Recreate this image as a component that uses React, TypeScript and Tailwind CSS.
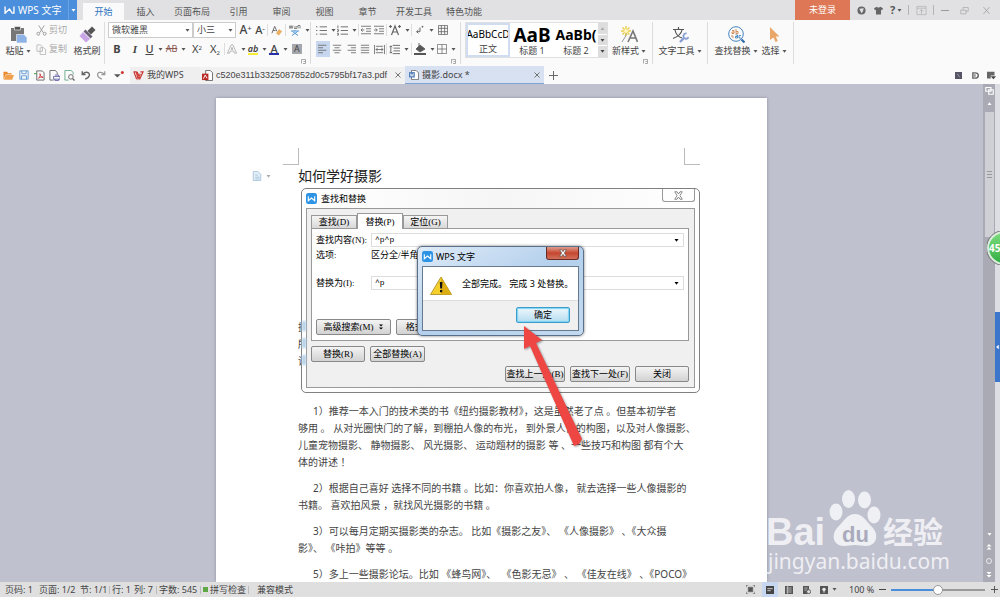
import type { ReactNode } from "react";

const menuTabs = ["插入", "页面布局", "引用", "审阅", "视图", "章节", "开发工具", "特色功能"];

const paragraphs = [
  [
    "1）推荐一本入门的技术类的书《纽约摄影教材》，这是虽然老了点 。但基本初学者",
    "够用 。 从对光圈快门的了解，到棚拍人像的布光， 到外景人像的构图，以及对人像摄影、",
    "儿童宠物摄影、 静物摄影、 风光摄影、 运动题材的摄影 等 、一些技巧和构图 都有个大",
    "体的讲述 ！",
  ],
  [
    "2）根据自己喜好 选择不同的书籍 。比如：你喜欢拍人像， 就去选择一些人像摄影的",
    "书籍。 喜欢拍风景 ，就找风光摄影的书籍 。",
  ],
  [
    "3）可以每月定期买摄影类的杂志。 比如《摄影之友》、 《人像摄影》 、《大众摄",
    "影》、 《咔拍》等等 。",
  ],
  ["5）多上一些摄影论坛。比如 《蜂鸟网》、  《色影无忌》 、 《佳友在线》 、《POCO》"],
];

export default function App() {
  return (
    <div className="flex h-screen flex-col overflow-hidden bg-[#bfc1cf] font-['Noto_Sans','Noto_Sans_CJK_SC',sans-serif] text-[9px] leading-3 text-[#444]">
      <TitleBar />
      <Ribbon />
      <DocumentTabs />
      <Workspace />
      <StatusBar />
    </div>
  );
}

/* ---------- shared bits ---------- */

function Caret({ className = "text-[#555]" }: { className?: string }) {
  return (
    <svg viewBox="0 0 5 3" className={`h-[3px] w-[5px] shrink-0 ${className}`} fill="currentColor">
      <path d="M0.5 0h4L2.5 2.8z" />
    </svg>
  );
}

function Icon({
  children,
  size = "size-3",
  className = "text-[#666]",
  box = "0 0 12 12",
}: {
  children: ReactNode;
  size?: string;
  className?: string;
  box?: string;
}) {
  return (
    <svg viewBox={box} className={`shrink-0 ${size} ${className}`} fill="none" stroke="currentColor" strokeWidth="1">
      {children}
    </svg>
  );
}

function Tool({ label, w = "w-[14px]", caret = false, active = false, children }: {
  label: string;
  w?: string;
  caret?: boolean;
  active?: boolean;
  children: ReactNode;
}) {
  return (
    <button
      type="button"
      aria-label={label}
      className={`flex h-4 shrink-0 items-center justify-center gap-1 ${w} ${active ? "bg-[#c6d7ef]" : ""}`}
    >
      {children}
      {caret && <Caret />}
    </button>
  );
}

function Bar() {
  return <span className="h-3 w-px shrink-0 bg-[#ddd]" />;
}

function BigTool({ label, w, caret = true, children }: { label: string; w: string; caret?: boolean; children: ReactNode }) {
  return (
    <button type="button" className={`flex shrink-0 flex-col items-center gap-[2px] pt-1 ${w}`}>
      {children}
      <span className="flex items-center gap-[2px] whitespace-nowrap">
        {label}
        {caret && <Caret />}
      </span>
    </button>
  );
}

function Launcher() {
  return (
    <Icon size="size-[5px]" box="0 0 5 5" className="absolute right-1 bottom-0 text-[#888]">
      <path d="M0.5 4.500V0.500H4.500V4.500H2M2.500 2.500H4" strokeWidth=".7" />
    </Icon>
  );
}

function WpsLogo({ className }: { className: string }) {
  return (
    <svg viewBox="0 0 12 12" className={className}>
      <rect width="12" height="12" rx="2.500" fill="#2d93e4" />
      <path d="M2.500 3.500v5l3.500-3 3.500 3v-5" fill="none" stroke="#fff" strokeWidth="1.200" />
    </svg>
  );
}

/* ---------- title bar ---------- */

function TitleBar() {
  return (
    <header className="flex h-5 shrink-0 items-stretch bg-[#e1e1e3]">
      <button type="button" className="flex w-[77px] shrink-0 items-center bg-[#4b8edb] text-[10px] text-white">
        <Icon className="ml-1 text-white" size="h-2 w-[11px]" box="0 0 12 9">
          <path d="M1 .5v7.500l5-4.500 3 4.500h2V.500M1 8l1.500-.5" strokeWidth="1.500" />
        </Icon>
        <span className="ml-[3px] flex-1 text-left whitespace-nowrap">WPS 文字</span>
        <span className="flex h-full w-[9px] items-center justify-center border-l border-[#6aa3e3]">
          <Caret className="text-white" />
        </span>
      </button>
      <nav className="ml-[6px] flex items-end">
        <button type="button" className="h-[17px] w-[41px] bg-[#fafafa] text-[#2e74c0]">开始</button>
        {menuTabs.map((t) => (
          <button
            key={t}
            type="button"
            className={`h-[17px] text-[#555] whitespace-nowrap ${t.length === 4 ? "w-[50px]" : "w-[43px]"}`}
          >
            {t}
          </button>
        ))}
      </nav>
      <div className="ml-auto flex items-center">
        <button type="button" className="mr-1 h-5 w-[55px] bg-[#dd7755] text-white">未登录</button>
        <Tool label="Skin">
          <svg viewBox="0 0 10 10" className="size-[9px]">
            <circle cx="5" cy="5" r="4.500" fill="#666" />
            <path d="M2.500 3l5-.5-1 3.500L5 8z" fill="#e1e1e3" />
          </svg>
        </Tool>
        <Tool label="Themes" w="w-5">
          <svg viewBox="0 0 10 10" className="size-[9px]" fill="#666">
            <path d="M3 .8L0 2.500l1 2.300 1.200-.5V9.500h5.600V4.300L9 4.800l1-2.300L7 .8C6.500 2 3.500 2 3 .8z" />
          </svg>
        </Tool>
        <Tool label="Help" w="w-4">
          <b className="-mr-[2px] text-[11px] text-[#555]">?</b>
          <Caret />
        </Tool>
        <span className="ml-1 h-[10px] w-px bg-[#b5b5b8]" />
        <Tool label="Collapse ribbon" w="w-6">
          <Icon size="size-[11px]" className="text-[#bbb]">
            <path d="M1 1.500h10v9H1zM1 3.500h10M6 10V5M4 7l2-2 2 2" />
          </Icon>
        </Tool>
        <span className="h-[10px] w-px bg-[#b5b5b8]" />
        <Tool label="Minimize" w="w-[22px]">
          <span className="h-px w-2 bg-[#999]" />
        </Tool>
        <Tool label="Restore" w="w-4">
          <Icon size="size-[9px]" className="text-[#aaa]">
            <path d="M1 5.500h7v5H1zM4 5V2h7v5H8" />
          </Icon>
        </Tool>
        <Tool label="Close" w="w-7">
          <Icon size="size-[9px]" className="text-[#999]">
            <path d="M2 1.500l8 9M10 1.500l-8 9" />
          </Icon>
        </Tool>
      </div>
    </header>
  );
}

/* ---------- ribbon ---------- */

function Ribbon() {
  return (
    <section className="flex h-[46px] shrink-0 bg-[#fafafa] py-[2px]">
      {/* clipboard */}
      <div className="flex w-[105px] shrink-0 border-r border-[#ddd]">
        <BigTool label="粘贴" w="w-9">
          <Icon size="size-[17px]" box="0 0 17 17">
            <path d="M1 2h13v13H1z" fill="#777" stroke="none" />
            <path d="M4.500 .5h6v3.500h-6z" fill="#555" stroke="#fafafa" strokeWidth=".6" />
            <path d="M6.500 8.500H14l3 3V17H6.500z" fill="#8fb2e6" stroke="#fafafa" strokeWidth=".6" />
          </Icon>
        </BigTool>
        <div className="flex w-9 shrink-0 flex-col gap-[3px] text-[#aaa]">
          <button type="button" className="flex h-4 items-center gap-[2px] whitespace-nowrap">
            <Icon size="size-[11px]" className="text-[#999]">
              <path d="M3 .5l5 8M9 .5l-5 8" />
              <circle cx="2.500" cy="9.500" r="1.600" />
              <circle cx="9.500" cy="9.500" r="1.600" />
            </Icon>
            剪切
          </button>
          <button type="button" className="flex h-4 items-center gap-[2px] whitespace-nowrap">
            <Icon size="size-[11px]" className="text-[#bbb]">
              <path d="M1 1h4l2 2v5H1zM4.500 4h4l2 2v5.500h-6z" fill="#fafafa" />
            </Icon>
            复制
          </button>
        </div>
        <BigTool label="格式刷" w="w-[30px]" caret={false}>
          <Icon size="size-[17px]" box="0 0 17 17">
            <path d="M13 .5L16.500 4 12 8.500 8.500 5z" fill="#555" stroke="none" />
            <path d="M6.500 3.500l7 7-2 2-7-7z" fill="#6b6177" stroke="none" />
            <path d="M4 6l7 7-4 3.500L.500 10z" fill="#c9a6e6" stroke="none" />
          </Icon>
        </BigTool>
      </div>

      {/* font */}
      <div className="relative flex w-[206px] shrink-0 flex-col gap-[3px] border-r border-[#ddd] pl-[3px]">
        <div className="flex h-4 items-center">
          <Combo label="Font" value="微软雅黑" w="w-[85px]" />
          <Combo label="Font size" value="小三" w="w-[43px]" />
          <Tool label="Grow font" w="ml-[2px] w-[15px]">
            <span className="text-[12px] font-medium">A<sup className="text-[7px]">+</sup></span>
          </Tool>
          <Tool label="Shrink font">
            <span className="text-[11px] font-medium">A<sup className="text-[7px]">-</sup></span>
          </Tool>
          <Bar />
          <Tool label="Clear format" w="w-[17px]">
            <Icon size="size-[11px]">
              <path d="M1 9L4 1.500 6.500 7M2 6h3" />
              <path d="M6 9l3-4 2.500 2-3 4z" fill="#f0b260" stroke="#d9933c" strokeWidth=".6" />
            </Icon>
          </Tool>
          <Bar />
          <Tool label="Phonetic guide" w="w-[26px]" caret>
            <Icon size="size-3">
              <path d="M0 1.500l1 3 1-3 1 3 1-3M5 3h3V2M5 4.500h3M9 4.500v-3h2v3" strokeWidth=".8" />
              <path d="M2 7h8M6 6v1M3.500 7.500L9 11.500M8.500 7.500L3 11.500" stroke="#4f97d6" />
            </Icon>
          </Tool>
        </div>
        <div className="flex h-4 items-center text-[11px]">
          <Tool label="Bold" w="w-[18px]"><b>B</b></Tool>
          <Tool label="Italic" w="w-[18px]"><i className="font-['Liberation_Serif',serif] font-bold">I</i></Tool>
          <Tool label="Underline" w="w-5" caret><span className="font-medium underline">U</span></Tool>
          <Tool label="Strikethrough" w="w-6" caret><span className="text-[9px] text-[#8b5550] line-through">AB</span></Tool>
          <Tool label="Superscript" w="w-[18px]"><span>X<sup className="text-[6px]">2</sup></span></Tool>
          <Tool label="Subscript" w="w-[18px]"><span>X<sub className="text-[6px]">2</sub></span></Tool>
          <Bar />
          <Tool label="Text effects" w="w-[22px]" caret>
            <Icon size="size-[10px]" className="text-[#999]">
              <path d="M.5 11L5 1h2l4.500 10H9L8 8.500H4L3 11zM5 6.500h2L6 4z" strokeWidth=".8" />
            </Icon>
          </Tool>
          <Tool label="Highlight" w="w-[21px]" caret>
            <span className="border-b-2 border-[#f5ec35] text-[9px] leading-[9px] font-semibold italic">ab</span>
          </Tool>
          <Tool label="Font color" w="w-[21px]" caret>
            <span className="border-b-2 border-[#2830a8] px-[1px] text-[11px] leading-[9px] font-medium">A</span>
          </Tool>
          <Tool label="Character shading" w="w-4">
            <span className="bg-[#a5a7ad] px-[2px] text-[9px] leading-[10px]">A</span>
          </Tool>
        </div>
        <Launcher />
      </div>

      {/* paragraph */}
      <div className="relative flex w-[150px] shrink-0 flex-col gap-[3px] border-r border-[#ddd] pl-[5px]">
        <div className="flex h-4 items-center">
          <Tool label="Bullets" w="w-5" caret>
            <Icon size="size-[11px]"><path d="M4 2h8M4 6h8M4 10h8M0 2h1.500M0 6h1.500M0 10h1.500" /></Icon>
          </Tool>
          <Tool label="Numbering" w="w-[22px]" caret>
            <Icon size="size-[11px]"><path d="M4 2h8M4 6h8M4 10h8M1 .5v3M0 5h1.500v2H0M0 9h1.500v2H0" /></Icon>
          </Tool>
          <Bar />
          <Tool label="Decrease indent" w="w-[13px]">
            <Icon size="size-[10px]"><path d="M0 1.500h12M6 4.500h6M6 7.500h6M0 10.500h12M4 6H0M2 4L0 6l2 2" /></Icon>
          </Tool>
          <Tool label="Increase indent">
            <Icon size="size-[10px]"><path d="M0 1.500h12M6 4.500h6M6 7.500h6M0 10.500h12M0 6h4M2 4l2 2-2 2" /></Icon>
          </Tool>
          <Bar />
          <Tool label="Text direction" w="w-6" caret>
            <Icon><path d="M2.500 11L6 2l3.500 9M4 8h4M0 2.500h3M1.500 1v3M9 2.500h3M10.500 1v3" strokeWidth="1.200" /></Icon>
          </Tool>
          <Bar />
          <Tool label="Paragraph marks" w="w-6" caret>
            <Icon size="size-[10px]"><path d="M2 8h4V3M2 8l2-2M2 8l2 2M9 1v2M8 2h2" strokeWidth="1.200" /></Icon>
          </Tool>
          <Tool label="Table">
            <Icon size="size-[10px]"><path d="M.5.500h11v11H.500zM.5 4h11M.500 8h11M4 .5v11M8 .5v11" /></Icon>
          </Tool>
        </div>
        <div className="flex h-4 items-center">
          <Tool label="Align left" active>
            <Icon size="size-[10px]"><path d="M0 1.500h10M0 4.500h6M0 7.500h10M0 10.500h6" /></Icon>
          </Tool>
          <Tool label="Center">
            <Icon size="size-[10px]"><path d="M1 1.500h10M3 4.500h6M1 7.500h10M3 10.500h6" /></Icon>
          </Tool>
          <Tool label="Align right">
            <Icon size="size-[10px]"><path d="M2 1.500h10M6 4.500h6M2 7.500h10M6 10.500h6" /></Icon>
          </Tool>
          <Tool label="Justify">
            <Icon size="size-[10px]"><path d="M1 1.500h10M1 4.500h10M1 7.500h10M1 10.500h10" /></Icon>
          </Tool>
          <Tool label="Distribute">
            <Icon size="size-[11px]"><path d="M.5 1v10M11.500 1v10M2 2.500h8M2 9.500h8M2 6h8M4 4.500L2 6l2 1.500M8 4.500L10 6 8 7.500" strokeWidth=".9" /></Icon>
          </Tool>
          <Bar />
          <Tool label="Line spacing" w="w-6" caret>
            <Icon size="size-[11px]"><path d="M4 1.500h8M5 4.500h7M5 7.500h7M4 10.500h8M2 2v8M.5 3.500L2 2l1.500 1.500M.500 8.500L2 10l1.500-1.500" /></Icon>
          </Tool>
          <Bar />
          <Tool label="Shading" w="w-6" caret>
            <Icon size="size-[12px]">
              <path d="M6 2l5 4-5 3-4-3z" fill="#555" />
              <path d="M5 0v4" />
              <path d="M0 10h12v2H0z" fill="#555" stroke="none" />
            </Icon>
          </Tool>
          <Tool label="Borders" w="w-5" caret>
            <Icon size="size-[10px]"><path d="M.5.500h11v11H.500zM.5 6h11M6 .5v11" strokeWidth=".9" /></Icon>
          </Tool>
        </div>
        <Launcher />
      </div>

      {/* styles */}
      <div className="relative flex w-[192px] shrink-0 border-r border-[#ddd] pl-1">
        <div className="flex h-9 shrink-0 border border-[#e0e0e0] bg-white text-black">
          <button type="button" className="flex w-[44px] flex-col items-center overflow-hidden border-2 border-[#d0dcf0]">
            <span className="flex h-5 items-center text-[10px]">AaBbCcD</span>
            <span className="text-[#444]">正文</span>
          </button>
          <button type="button" className="flex w-[44px] flex-col items-center pt-[2px]">
            <span className="h-5 text-[19px] leading-5 font-bold">AaB</span>
            <span className="text-[#444]">标题 1</span>
          </button>
          <button type="button" className="flex w-[44px] flex-col items-center pt-[2px]">
            <span className="h-5 text-[14px] leading-5 font-bold">AaBb(</span>
            <span className="text-[#444]">标题 2</span>
          </button>
          <div className="flex w-[9px] flex-col gap-px">
            {["Scroll styles up", "Scroll styles down", "More styles"].map((n, i) => (
              <button key={n} type="button" aria-label={n} className="flex flex-1 items-center justify-center bg-[#ddd]">
                <Caret className={i === 0 ? "rotate-180 text-[#aaa]" : "text-[#444]"} />
              </button>
            ))}
          </div>
        </div>
        <BigTool label="新样式" w="w-[42px]">
          <Icon size="size-[17px]" box="0 0 17 17">
            <path d="M7 16L12 5l4.500 11M9 12h6" stroke="#777" strokeWidth="1.600" />
            <path d="M4 10l2-4M1 16l5-8" stroke="#999" />
            <path d="M5 0v10M0 5h10M1.500 1.500l7 7M8.500 1.500l-7 7" stroke="#ebcc4b" strokeWidth="1.400" />
            <circle cx="5" cy="5" r="2" fill="#fff6c0" stroke="none" />
          </Icon>
        </BigTool>
        <Launcher />
      </div>

      {/* text tools */}
      <div className="flex w-[55px] shrink-0 justify-center border-r border-[#ddd]">
        <BigTool label="文字工具" w="w-[44px]">
          <Icon size="size-[17px]" box="0 0 17 17">
            <path d="M1 3.500h11M6.500 1v2.500M3 4c1 5 4 7 7 8M10 4C9 9 5 11 1 12.500" stroke="#555" strokeWidth="1.200" />
            <path d="M8 16l4-4" stroke="#879fd2" strokeWidth="2.400" />
            <path d="M14.500 7.500a2.600 2.600 0 10 2 3.500" stroke="#879fd2" strokeWidth="1.800" />
          </Icon>
        </BigTool>
      </div>

      {/* find and select */}
      <div className="flex w-[86px] shrink-0 border-r border-[#ddd] pl-[5px]">
        <BigTool label="查找替换" w="w-[46px]">
          <Icon size="size-[17px]" box="0 0 17 17">
            <circle cx="8" cy="8" r="7.300" stroke="#4384bf" />
            <path d="M13.500 13.500l3 3" stroke="#2e6da8" strokeWidth="2.200" />
            <path d="M4 4.500h2v3H4V6h2M8 3v4.500h2V5.500H8M4 9v2h2" stroke="#cf8850" strokeWidth=".9" />
            <path d="M7.500 9h2v3h-2v-1.500h2M13 9.500h-2V12h2" stroke="#4384bf" strokeWidth=".9" />
          </Icon>
        </BigTool>
        <BigTool label="选择" w="w-[30px]">
          <Icon size="size-[17px]" box="0 0 17 17">
            <path d="M4 1l9.500 9.500H9.800l2 4.500-2.300 1-2-4.500L4 14z" fill="#e9a869" stroke="none" />
          </Icon>
        </BigTool>
      </div>
    </section>
  );
}

function Combo({ label, value, w }: { label: string; value: string; w: string }) {
  return (
    <span className={`relative flex h-4 shrink-0 items-center border border-[#ccc] bg-white ${w}`}>
      <select aria-label={label} className="h-full w-full appearance-none bg-transparent pl-[3px] outline-none">
        <option>{value}</option>
      </select>
      <span className="pointer-events-none absolute right-[2px]"><Caret /></span>
    </span>
  );
}

/* ---------- quick access + open documents ---------- */

function DocumentTabs() {
  return (
    <div className="flex h-[18px] shrink-0 items-center bg-[#fafafa]">
      <div className="flex w-[130px] shrink-0 items-center">
        <Tool label="Open" w="w-4">
          <Icon size="size-[11px]"><path d="M.5 10.500V2h4l1 1.500h4V5H3z" fill="#e98b2e" stroke="none" /><path d="M3 5.500h9L10 10.500H1z" fill="#f0a04b" stroke="none" /></Icon>
        </Tool>
        <Tool label="Save" w="w-4">
          <Icon size="size-[10px]" className="text-[#4d8fcd]"><path d="M1 1h10v10H1zM3.500 1v3.500h5V1M3 11V7h6v4" /></Icon>
        </Tool>
        <Tool label="Export PDF" w="w-[15px]">
          <Icon size="size-[11px]"><path d="M3 1h6l2 2v8H3z" /><path d="M5 9c2-2 2-4 1.500-5C7 7 8 7.500 10 8 8 7.500 6 8 5 9z" stroke="#c33" /><path d="M0 4h3" stroke="#393" /></Icon>
        </Tool>
        <Tool label="Print" w="w-[15px]">
          <Icon size="size-[11px]"><path d="M9 5V3L7 .5H1V11h4" /><path d="M5 7h7v3H5zM6.500 5.500h4V7M6.500 10v1.500h4V10" stroke="#66a" /></Icon>
        </Tool>
        <Tool label="Print preview" w="w-[15px]">
          <Icon size="size-[11px]"><path d="M10 5V3L8 .5H1V11h4" stroke="#6a8" /><circle cx="7.500" cy="7.500" r="2.500" /><path d="M9.500 9.500l2 2" strokeWidth="1.500" /></Icon>
        </Tool>
        <Tool label="Undo" w="w-[17px]">
          <Icon size="size-[10px]" className="text-[#666]"><path d="M2 5c4-4 9-2 8 1.500C9.500 9 7.500 10 5 11M1.500 1.500V5.500h4" strokeWidth="1.700" /></Icon>
        </Tool>
        <Tool label="Redo" w="w-[14px]">
          <Icon size="size-[10px]" className="text-[#999]"><path d="M10 5C6 1 1 3 2 6.500 2.500 9 4.500 10 7 11M10.500 1.500V5.500h-4" strokeWidth="1.500" /></Icon>
        </Tool>
        <Tool label="More commands" w="w-[22px]">
          <Icon size="size-[10px]"><path d="M0 5h8L4 9z" fill="#555" stroke="none" /><circle cx="10" cy="3" r="1.800" fill="#d0342c" stroke="none" /></Icon>
        </Tool>
      </div>
      <button type="button" className="flex h-[17px] w-[70px] shrink-0 items-center gap-[3px] bg-[#efeff0] pl-[3px] whitespace-nowrap">
        <Icon size="size-[11px]" className="text-[#cc3a33]"><path d="M.5 2h3l2 7.500L8 4M4.500 2l3 7.500L11 2H8M1 2l3 8" strokeWidth="1.300" /></Icon>
        我的WPS
      </button>
      <div className="flex h-[17px] w-[205px] shrink-0 items-center gap-[3px] bg-[#f1f1f2] pr-1 pl-[2px]">
        <Icon size="size-[11px]"><path d="M4 .5h5l2.500 2.500v8.500H4z" fill="#fff" /><path d="M0 4h7v7H0z" fill="#b92b27" stroke="none" /><path d="M1.500 9.500l2-4 2 3.500" stroke="#fff" /></Icon>
        <button type="button" className="flex-1 text-left font-['Liberation_Sans',Arial,sans-serif] whitespace-nowrap">
          c520e311b3325087852d0c5795bf17a3.pdf
        </button>
        <CloseTab />
      </div>
      <div className="flex h-[18px] w-[139px] shrink-0 items-center gap-[3px] border-b border-[#7ea3d4] bg-[#d8e1f2] pr-1 pl-1">
        <Icon size="size-[10px]"><path d="M3 .5h5.500l3 3v8H3z" fill="#fff" /><path d="M0 2.500h7v6.500H0z" fill="#5580b8" stroke="none" /><path d="M1.500 4l1 3.500 1-2.500 1 2.500 1-3.500" stroke="#fff" strokeWidth=".8" /></Icon>
        <button type="button" className="flex-1 text-left whitespace-nowrap">摄影.docx *</button>
        <CloseTab />
      </div>
      <Tool label="New tab" w="w-[18px]">
        <Icon size="size-[9px]"><path d="M6 0v12M0 6h12" strokeWidth="1.300" /></Icon>
      </Tool>
      <div className="ml-auto flex items-center">
        <Tool label="Sidebar" w="w-[17px]">
          <Icon size="size-[7px]"><path d="M0 0h12v12H0z" fill="#556" stroke="none" /><path d="M4 3l4 6" stroke="#ccc" /></Icon>
        </Tool>
        <Tool label="Docer" w="w-4">
          <Icon size="size-[7px]"><path d="M1.500 1.500h4c7 0 7 9 0 9h-4z" strokeWidth="2.500" /><path d="M5 4v4" strokeWidth="2" /></Icon>
        </Tool>
        <Tool label="Window list" w="w-[17px]">
          <Icon size="size-[9px]"><path d="M0 1h10v5H5v4H0z" fill="#666" stroke="none" /><path d="M5 7h7l-3.500 4z" fill="#444" stroke="none" /></Icon>
        </Tool>
      </div>
    </div>
  );
}

function CloseTab() {
  return (
    <button type="button" aria-label="Close tab" className="shrink-0">
      <Icon size="size-[6px]"><path d="M1 1l10 10M11 1L1 11" strokeWidth="1.800" /></Icon>
    </button>
  );
}

/* ---------- workspace ---------- */

function Workspace() {
  return (
    <main className="relative flex min-h-0 flex-1">
      <div className="flex min-w-0 flex-1 justify-center overflow-hidden pt-[14px]">
        <Page />
      </div>

      {/* scroll bar */}
      <div className="flex w-3 shrink-0 flex-col items-center bg-[#a9aab3] text-white">
        <Icon size="size-[9px]" className="mt-[2px] text-white"><path d="M1 2h7v5H1zM5 5h6v6H5z" strokeWidth="1.500" /></Icon>
        <Caret className="mt-[7px] rotate-180 text-white" />
        <div className="mt-[7px] flex h-[125px] w-[9px] flex-col items-center justify-center gap-[2px] bg-[#cfd0d5]">
          <span className="h-px w-[5px] bg-[#999]" />
          <span className="h-px w-[5px] bg-[#999]" />
          <span className="h-px w-[5px] bg-[#999]" />
        </div>
        <div className="mt-auto flex flex-col items-center gap-2 pb-1">
          <Caret className="text-white" />
          <Icon size="size-[6px]" className="text-white"><path d="M6 0l5 5H1zM6 6l5 5H1z" fill="#fff" stroke="none" /></Icon>
          <Icon size="size-[6px]" className="text-white"><circle cx="6" cy="6" r="5" strokeWidth="1.500" /></Icon>
          <Icon size="size-[6px]" className="text-white"><path d="M6 5L1 0h10zM6 11L1 6h10z" fill="#fff" stroke="none" /></Icon>
        </div>
      </div>
      <div className="w-[5px] shrink-0 bg-[#dddee3] pt-[228px]">
        <button type="button" aria-label="Open task pane" className="flex h-[70px] w-full items-center justify-center bg-[#3c76cb]">
          <Icon size="size-[4px]" className="text-white"><path d="M8 0L1 6l7 6z" fill="#fff" /></Icon>
        </button>
      </div>

      {/* floating badge, half outside the window */}
      <div className="absolute top-[147px] right-0 h-[34px] w-[13px] overflow-hidden">
        <div className="flex size-[34px] items-center rounded-full border-2 border-[#d8eedb] bg-linear-to-b from-[#7bdc7d] to-[#2fae43] text-[10px] font-bold text-white outline outline-[#777]">
          45
        </div>
      </div>

      <Watermark />
    </main>
  );
}

function Page() {
  return (
    <article className="relative min-h-full w-[551px] shrink-0 bg-white shadow-[0_0_3px_#8d8f9a]">
      <div className="flex justify-between px-[67px] pt-[50px]">
        <span className="h-[17px] w-4 border-r border-b border-[#bbb]" />
        <span className="h-[17px] w-4 border-b border-l border-[#bbb]" />
      </div>
      <div className="flex items-center pl-9">
        <div className="flex w-[46px] items-center gap-1">
          <Icon size="size-[10px]" className="text-[#a3c1d8]"><path d="M1.500.500H7l3.500 3.500v7.500h-9zM4 5h3M4 7.500h5M4 9.500h5" fill="#dfeef7" /></Icon>
          <Caret className="text-[#aaa]" />
        </div>
        <h1 className="text-[14px] leading-[22px] text-[#222]">如何学好摄影</h1>
      </div>

      <div className="px-[82px] text-[10px] leading-[17px] text-[#444]">
        <p className="mt-[132px] mb-[33px]">
          <span className="block">摄</span>
          <span className="block">所</span>
          <span className="block">讲</span>
        </p>
        {paragraphs.map((lines) => (
          <p key={lines[0]} className="mb-[9px] indent-[15px]">
            {lines.map((line, i) => (
              <span key={line} className={`block whitespace-pre ${i > 0 ? "indent-0" : ""}`}>
                {line}
              </span>
            ))}
          </p>
        ))}
      </div>

      <FindReplaceDialog />
      <MessageBox />

      <svg viewBox="0 0 64 126" className="absolute top-[226px] left-[304px] h-[126px] w-16 drop-shadow-[1px_1px_1px_#0006]">
        <path d="M4 2L22 16l-6 3 46 96-3 5-5 2L10 22l-6 3z" fill="#ee4642" />
      </svg>
    </article>
  );
}

/* ---------- find and replace ---------- */

function DialogButton({ children, w }: { children: ReactNode; w: string }) {
  return (
    <button
      type="button"
      className={`flex h-4 shrink-0 items-center justify-center gap-1 rounded-[2px] border border-[#888] bg-linear-to-b from-[#f4f4f4] to-[#d2d2d2] whitespace-nowrap ${w}`}
    >
      {children}
    </button>
  );
}

function ComboInput({ id, value }: { id: string; value: string }) {
  return (
    <div className="flex h-[14px] flex-1 items-center border border-[#ddd] bg-white pr-1">
      <input id={id} defaultValue={value} className="min-w-0 flex-1 bg-transparent pl-[3px] font-['Liberation_Mono',monospace] text-[8px] outline-none" />
      <button type="button" aria-label="Show history"><Caret className="text-black" /></button>
    </div>
  );
}

function FindReplaceDialog() {
  return (
    <div
      role="dialog"
      aria-label="查找和替换"
      className="absolute top-[90px] left-[85px] flex h-[205px] w-[399px] flex-col rounded-[5px] border border-[#808080] bg-linear-to-r from-white via-[#f6f6f6] to-white px-1 pb-1 font-['Liberation_Serif','Noto_Sans_CJK_SC',serif] text-[9px] leading-3 text-black"
    >
      <div className="flex h-[19px] shrink-0 items-center">
        <WpsLogo className="size-[11px]" />
        <span className="ml-1">查找和替换</span>
        <button
          type="button"
          aria-label="Close"
          className="ml-auto flex h-[13px] w-[33px] items-center justify-center self-start rounded-b-[3px] border border-t-0 border-[#999]"
        >
          <Icon size="size-[9px]" className="text-[#666]"><path d="M1 1h3l2 3 2-3h3L8 6l3 5H8L6 8l-2 3H1l3-5z" fill="#fff" /></Icon>
        </button>
      </div>
      <div className="flex flex-1 flex-col border border-[#999] bg-[#f0f0f0] pt-1 pr-[5px] pl-1">
        <div className="flex items-end">
          <button type="button" className="h-[13px] w-[46px] border border-b-0 border-[#999] bg-linear-to-b from-[#f5f5f5] to-[#d8d8d8]">查找(D)</button>
          <button type="button" className="relative -mb-px h-4 w-[46px] border border-b-0 border-[#999] bg-white">替换(P)</button>
          <button type="button" className="h-[13px] w-[45px] border border-b-0 border-[#999] bg-linear-to-b from-[#f5f5f5] to-[#d8d8d8]">定位(G)</button>
        </div>
        <div className="flex h-[113px] flex-col border border-[#999] bg-white pt-1 pr-1 pl-1">
          <div className="flex items-center">
            <label htmlFor="find" className="w-[55px]">查找内容(N):</label>
            <ComboInput id="find" value="^p^p" />
          </div>
          <div className="mt-[2px] flex">
            <span className="w-[55px]">选项:</span>
            <span>区分全/半角</span>
          </div>
          <div className="mt-[15px] flex items-center">
            <label htmlFor="replace" className="w-[55px]">替换为(I):</label>
            <ComboInput id="replace" value="^p" />
          </div>
          <div className="mt-[29px] flex gap-[5px]">
            <DialogButton w="w-[75px]">
              高级搜索(M)
              <Icon size="size-[6px]" className="text-black"><path d="M6 5L2 1h8zM6 11L2 7h8z" fill="currentColor" stroke="none" /></Icon>
            </DialogButton>
            <DialogButton w="w-[50px]">格式(O)</DialogButton>
          </div>
        </div>
        <div className="mt-[5px] flex gap-[5px]">
          <DialogButton w="w-[54px]">替换(R)</DialogButton>
          <DialogButton w="w-[55px]">全部替换(A)</DialogButton>
        </div>
        <div className="mt-1 flex justify-end gap-[5px]">
          <DialogButton w="w-[60px]">查找上一处(B)</DialogButton>
          <DialogButton w="w-[60px]">查找下一处(F)</DialogButton>
          <DialogButton w="w-[54px]">关闭</DialogButton>
        </div>
      </div>
      {/* selected lines showing through the glass frame */}
      <div className="absolute top-[132px] left-0 flex flex-col gap-[7px]">
        <span className="h-[10px] w-1 bg-[#b4d0e8] blur-[1px]" />
        <span className="h-[10px] w-1 bg-[#b4d0e8] blur-[1px]" />
        <span className="h-[10px] w-1 bg-[#b4d0e8] blur-[1px]" />
      </div>
    </div>
  );
}

function MessageBox() {
  return (
    <div
      role="alertdialog"
      aria-label="WPS 文字"
      className="absolute top-[148px] left-[201px] flex h-[90px] w-[167px] flex-col rounded-[5px] border border-[#5a6f8a] bg-linear-to-br from-[#dfebf8] via-[#b4d0ec] to-[#c3daf0] px-1 pb-1 text-[9px] leading-3 text-black shadow-[0_0_3px_#0008]"
    >
      <div className="flex h-[19px] shrink-0 items-center">
        <WpsLogo className="size-[11px]" />
        <span className="ml-[3px]">WPS 文字</span>
        <button
          type="button"
          aria-label="Close"
          className="ml-auto flex h-[13px] w-[33px] items-center justify-center self-start rounded-b-[3px] border border-t-0 border-[#6b2b24] bg-linear-to-b from-[#dd9c8d] via-[#c5452f] to-[#d0705a]"
        >
          <Icon size="size-[8px]" className="text-[#555]"><path d="M1 1h3l2 3 2-3h3L8 6l3 5H8L6 8l-2 3H1l3-5z" fill="#fff" /></Icon>
        </button>
      </div>
      <div className="flex flex-1 flex-col border border-[#66798f] bg-[#f0f0f0]">
        <div className="flex h-[34px] items-center border-b border-[#ddd] bg-white pl-[7px]">
          <svg viewBox="0 0 22 20" className="mt-1 h-5 w-[22px] shrink-0">
            <path d="M11 1L21.500 18.500H.500z" fill="#f5d02c" stroke="#b79a32" strokeLinejoin="round" />
            <path d="M11 1L21.500 18.500H11z" fill="#dcae14" />
            <path d="M9.800 6h2.600l-.4 6.500h-1.800zM10 14h2.200v2.200H10z" fill="#111" />
          </svg>
          <span className="ml-[10px] whitespace-nowrap">全部完成。 完成 3 处替换。</span>
        </div>
        <div className="flex flex-1 items-start justify-end pt-[6px] pr-2">
          <button
            type="button"
            className="h-4 w-[54px] rounded-[2px] border border-[#3c9cc9] bg-linear-to-b from-[#eef8fd] to-[#b5dcf0] shadow-[inset_0_0_1px_1px_#7fd3f5]"
          >
            确定
          </button>
        </div>
      </div>
    </div>
  );
}

function Watermark() {
  return (
    <svg viewBox="0 0 190 90" className="pointer-events-none absolute right-[48px] bottom-[5px] h-[90px] w-[190px]" fill="#fff" fillOpacity=".75">
      <g className="font-['Liberation_Sans','Noto_Sans_CJK_SC',sans-serif] font-bold">
        <text x="4" y="58" fontSize="38">Bai</text>
        <text x="121" y="56" fontSize="30">经验</text>
      </g>
      <ellipse cx="74" cy="25" rx="6.500" ry="8.500" />
      <ellipse cx="86.500" cy="12" rx="6.500" ry="9" />
      <ellipse cx="102.500" cy="13" rx="6.500" ry="8.500" />
      <ellipse cx="112" cy="28" rx="6.500" ry="8.500" />
      <path d="M93 27c8 0 11 7 16 12 9 8 6 20-5 20-4 0-7-1-11-1s-7 1-11 1c-11 0-14-12-5-20 5-5 8-12 16-12z" />
      <text x="80" y="55" fontSize="22" fill="#a9abbd" fillOpacity="1" className="font-['Liberation_Sans',sans-serif] font-bold">du</text>
      <text x="6" y="82" fontSize="21" className="font-['Noto_Sans',sans-serif]">jingyan.baidu.com</text>
    </svg>
  );
}

/* ---------- status bar ---------- */

function StatusBar() {
  return (
    <footer className="flex h-[15px] shrink-0 items-center bg-[#dfdfe0] whitespace-nowrap">
      <div className="flex items-center pl-[5px]">
        <span className="w-[34px]">页码: 1</span>
        <span className="w-[41px]">页面: 1/2</span>
        <span className="w-[29px]">节: 1/1</span>
        <Divider />
        <span className="w-6 pl-[2px]">行: 1</span>
        <span className="w-[22px]">列: 7</span>
        <Divider />
        <span className="w-[43px] pl-[2px]">字数: 545</span>
        <Divider />
        <span className="mx-[2px] size-[5px] bg-[#5da845]" />
        <button type="button" className="w-[38px] text-left">拼写检查</button>
        <Divider />
        <span className="ml-2">兼容模式</span>
      </div>
      <div className="ml-auto flex items-center">
        <Tool label="Full screen" w="mr-[2px] w-5">
          <Icon size="size-[9px]"><path d="M3 3h6v6H3z" fill="#555" /><path d="M0 3V0h3M9 0h3v3M12 9v3H9M3 12H0V9" strokeWidth="1.500" /></Icon>
        </Tool>
        <Tool label="Page view" w="w-4" active>
          <Icon size="size-[8px]"><path d="M0 0h12v12H0z" fill="#444" stroke="none" /><path d="M2 4h8M2 7h5" stroke="#ccc" strokeWidth="1.500" /></Icon>
        </Tool>
        <Tool label="Outline view" w="w-[21px]">
          <Icon size="size-[8px]"><path d="M0 0h12v12H0z" fill="#555" stroke="none" /><path d="M2 3h8M2 6h8M2 9h8M4 0v12" stroke="#ddd" /></Icon>
        </Tool>
        <Tool label="Web view" w="w-4">
          <Icon size="size-[8px]"><path d="M0 0h9v12H0z" fill="#555" stroke="none" /><path d="M2 3h5M2 6h4" stroke="#ddd" /><circle cx="8.500" cy="8.500" r="3" fill="#ddd" strokeWidth="1.500" /></Icon>
        </Tool>
        <Tool label="Eye care" w="w-[26px]">
          <Icon size="size-[8px]"><path d="M0 0h12v12H0z" fill="#555" stroke="none" /><circle cx="6" cy="5" r="2.500" fill="#eee" stroke="none" /><path d="M6 6v4" stroke="#eee" strokeWidth="1.500" /></Icon>
          <Caret />
        </Tool>
        <span className="ml-2 w-[27px]">100 %</span>
        <Tool label="Zoom out" w="w-3"><span className="h-px w-[7px] bg-[#444]" /></Tool>
        <input
          type="range"
          aria-label="Zoom"
          defaultValue={50}
          className="mx-[3px] h-[10px] w-[94px] appearance-none bg-[linear-gradient(90deg,#4a8edb_50%,#999_50%)] bg-size-[100%_2px] bg-center bg-no-repeat [&::-webkit-slider-thumb]:size-[10px] [&::-webkit-slider-thumb]:appearance-none [&::-webkit-slider-thumb]:rounded-full [&::-webkit-slider-thumb]:border [&::-webkit-slider-thumb]:border-[#999] [&::-webkit-slider-thumb]:bg-white"
        />
        <Tool label="Zoom in" w="w-3">
          <Icon size="size-[7px]" className="text-[#444]"><path d="M6 0v12M0 6h12" strokeWidth="1.500" /></Icon>
        </Tool>
      </div>
    </footer>
  );
}

function Divider() {
  return <span className="h-2 w-px shrink-0 bg-[#bbb]" />;
}
